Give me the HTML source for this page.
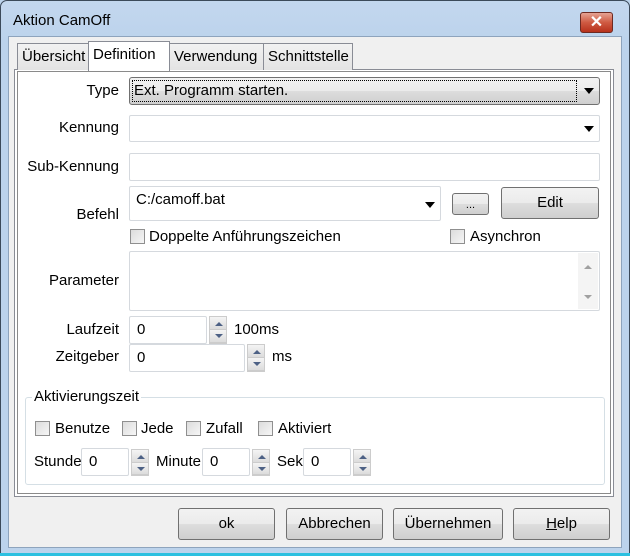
<!DOCTYPE html>
<html><head><meta charset="utf-8"><style>
*{box-sizing:border-box;margin:0;padding:0}
body{width:630px;height:556px;position:relative;overflow:hidden;background:#bcd3ec;font-family:"Liberation Sans",sans-serif;font-size:15px;color:#000}
.a{position:absolute}
.frame{left:0;top:0;width:630px;height:556px;border:1px solid #3c4a5a;border-radius:7px 7px 0 0;background:linear-gradient(#c3d7ee,#bcd3ec 40px);}
.client{left:8px;top:36px;width:614px;height:512px;background:#f0f0f0;border:1px solid #8ea4bd}
.tab{top:43px;height:27px;border:1px solid #898c95;border-bottom:none;background:linear-gradient(#f2f2f2,#e3e3e3);padding:4px 0 0 4px;white-space:nowrap}
.panel{left:14px;top:69px;width:600px;height:428px;border:1px solid #898c95;background:#fff}
.inner{left:17px;top:71px;width:594px;height:423px;border:1px solid #8a8a8a;background:#fff}
.lbl{text-align:right;width:110px;left:9px}
.box{border:1px solid #d5d9de;background:#fff;border-radius:2px}
.cb{width:15px;height:15px;border:1px solid #8f8f8f;background:linear-gradient(135deg,#dcdcdc,#f6f6f6)}
.btn{border:1px solid #707070;border-radius:3px;background:linear-gradient(#f2f2f2 0,#ebebeb 50%,#dddddd 51%,#cfcfcf);text-align:center;line-height:30px}
.sp{width:18px;border:1px solid #ccc}
.sp div{height:50%;background:linear-gradient(#f4f4f4,#dcdcdc);border-bottom:1px solid #ccc;position:relative}
.sp div:after{content:"";position:absolute;left:5px;top:4px;border:4px solid transparent}
.up:after{border-bottom:4px solid #4d6185!important;top:1px!important}
.dn:after{border-top:4px solid #4d6185!important;top:4px!important}
.arr{width:0;height:0;border:5px solid transparent;border-top:6px solid #000}
</style></head><body>
<div class="a frame"></div>
<div class="a" style="left:13px;top:12px;font-size:15px">Aktion CamOff</div>
<div class="a" style="left:580px;top:12px;width:33px;height:21px;border:1px solid #6d2a22;border-radius:3px;background:linear-gradient(#e5a293,#cf5a42 50%,#b7321c);color:#fff;font-weight:bold;text-align:center;line-height:19px;font-size:16px">✕</div>
<div class="a client"></div>
<div class="a panel"></div>
<div class="a tab" style="left:17px;width:72px">Übersicht</div>
<div class="a tab" style="left:169px;width:95px">Verwendung</div>
<div class="a tab" style="left:263px;width:90px">Schnittstelle</div>
<div class="a tab" style="left:88px;top:41px;height:30px;width:82px;background:#fff;padding-top:4px;z-index:2">Definition</div>
<div class="a inner"></div>

<div class="a lbl" style="top:82px">Type</div>
<div class="a" style="left:129px;top:77px;width:471px;height:28px;border:1px solid #707070;border-radius:3px;background:linear-gradient(#f2f2f2,#ebebeb 50%,#ddd 51%,#cfcfcf)"></div>
<div class="a" style="left:132px;top:80px;width:445px;height:22px;border:1px dotted #000;padding:1px 0 0 1px">Ext. Programm starten.</div>
<div class="a arr" style="left:584px;top:88px"></div>

<div class="a lbl" style="top:119px">Kennung</div>
<div class="a box" style="left:129px;top:115px;width:471px;height:27px"></div>
<div class="a arr" style="left:584px;top:126px"></div>

<div class="a lbl" style="top:158px">Sub-Kennung</div>
<div class="a box" style="left:129px;top:153px;width:471px;height:28px"></div>

<div class="a lbl" style="top:206px">Befehl</div>
<div class="a box" style="left:129px;top:186px;width:312px;height:35px;padding:4px 0 0 6px">C:/camoff.bat</div>
<div class="a arr" style="left:425px;top:202px"></div>
<div class="a btn" style="left:452px;top:193px;width:37px;height:22px;line-height:22px;font-size:11px">...</div>
<div class="a btn" style="left:501px;top:187px;width:98px;height:32px">Edit</div>

<div class="a cb" style="left:130px;top:229px"></div>
<div class="a" style="left:149px;top:228px">Doppelte Anführungszeichen</div>
<div class="a cb" style="left:450px;top:229px"></div>
<div class="a" style="left:470px;top:228px">Asynchron</div>

<div class="a lbl" style="top:272px">Parameter</div>
<div class="a box" style="left:129px;top:251px;width:471px;height:60px"></div>
<div class="a" style="left:578px;top:253px;width:20px;height:56px;background:#f4f4f4"></div>
<div class="a" style="left:584px;top:261px;border:4px solid transparent;border-bottom:4px solid #a0a0a0"></div>
<div class="a" style="left:584px;top:295px;border:4px solid transparent;border-top:4px solid #a0a0a0"></div>

<div class="a lbl" style="top:321px">Laufzeit</div>
<div class="a box" style="left:129px;top:316px;width:78px;height:28px;padding:4px 0 0 7px">0</div>
<div class="a sp" style="left:209px;top:316px;height:28px"><div class="up"></div><div class="dn"></div></div>
<div class="a" style="left:234px;top:321px">100ms</div>

<div class="a lbl" style="top:348px">Zeitgeber</div>
<div class="a box" style="left:129px;top:344px;width:116px;height:28px;padding:4px 0 0 7px">0</div>
<div class="a sp" style="left:247px;top:344px;height:28px"><div class="up"></div><div class="dn"></div></div>
<div class="a" style="left:272px;top:348px">ms</div>

<div class="a" style="left:25px;top:397px;width:580px;height:88px;border:1px solid #d5dfe5;border-radius:3px"></div>
<div class="a" style="left:32px;top:388px;background:#fff;padding:0 2px">Aktivierungszeit</div>

<div class="a cb" style="left:35px;top:421px"></div><div class="a" style="left:55px;top:420px">Benutze</div>
<div class="a cb" style="left:122px;top:421px"></div><div class="a" style="left:141px;top:420px">Jede</div>
<div class="a cb" style="left:186px;top:421px"></div><div class="a" style="left:206px;top:420px">Zufall</div>
<div class="a cb" style="left:258px;top:421px"></div><div class="a" style="left:278px;top:420px">Aktiviert</div>

<div class="a" style="left:34px;top:453px">Stunde</div>
<div class="a box" style="left:81px;top:448px;width:48px;height:28px;padding:4px 0 0 7px">0</div>
<div class="a sp" style="left:131px;top:449px;height:27px"><div class="up"></div><div class="dn"></div></div>
<div class="a" style="left:156px;top:453px">Minute</div>
<div class="a box" style="left:202px;top:448px;width:48px;height:28px;padding:4px 0 0 7px">0</div>
<div class="a sp" style="left:252px;top:449px;height:27px"><div class="up"></div><div class="dn"></div></div>
<div class="a" style="left:277px;top:453px">Sek.</div>
<div class="a box" style="left:303px;top:448px;width:48px;height:28px;padding:4px 0 0 7px">0</div>
<div class="a sp" style="left:353px;top:449px;height:27px"><div class="up"></div><div class="dn"></div></div>

<div class="a btn" style="left:178px;top:508px;width:97px;height:32px">ok</div>
<div class="a btn" style="left:286px;top:508px;width:97px;height:32px">Abbrechen</div>
<div class="a btn" style="left:393px;top:508px;width:110px;height:32px">Übernehmen</div>
<div class="a btn" style="left:513px;top:508px;width:97px;height:32px"><u>H</u>elp</div>
<div class="a" style="left:0;top:553px;width:630px;height:3px;background:#2bc0e0"></div>
</body></html>
